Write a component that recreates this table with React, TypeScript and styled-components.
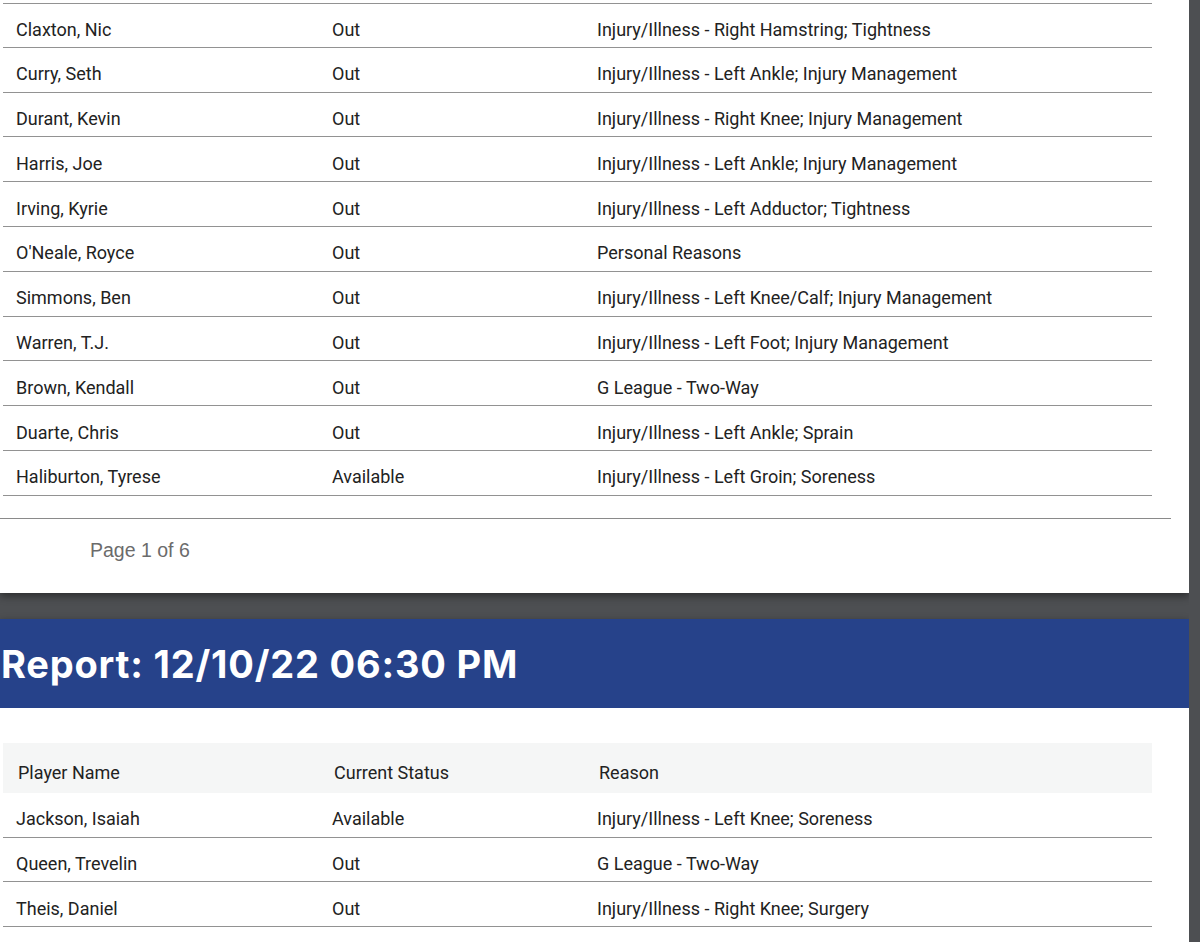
import React from 'react'
import styled, { createGlobalStyle } from 'styled-components'

type Row = {
  name: string
  status: string
  reason: string
}

const firstPage: Row[] = [
  { name: 'Claxton, Nic', status: 'Out', reason: 'Injury/Illness - Right Hamstring; Tightness' },
  { name: 'Curry, Seth', status: 'Out', reason: 'Injury/Illness - Left Ankle; Injury Management' },
  { name: 'Durant, Kevin', status: 'Out', reason: 'Injury/Illness - Right Knee; Injury Management' },
  { name: 'Harris, Joe', status: 'Out', reason: 'Injury/Illness - Left Ankle; Injury Management' },
  { name: 'Irving, Kyrie', status: 'Out', reason: 'Injury/Illness - Left Adductor; Tightness' },
  { name: "O'Neale, Royce", status: 'Out', reason: 'Personal Reasons' },
  { name: 'Simmons, Ben', status: 'Out', reason: 'Injury/Illness - Left Knee/Calf; Injury Management' },
  { name: 'Warren, T.J.', status: 'Out', reason: 'Injury/Illness - Left Foot; Injury Management' },
  { name: 'Brown, Kendall', status: 'Out', reason: 'G League - Two-Way' },
  { name: 'Duarte, Chris', status: 'Out', reason: 'Injury/Illness - Left Ankle; Sprain' },
  { name: 'Haliburton, Tyrese', status: 'Available', reason: 'Injury/Illness - Left Groin; Soreness' },
]

const secondPage: Row[] = [
  { name: 'Jackson, Isaiah', status: 'Available', reason: 'Injury/Illness - Left Knee; Soreness' },
  { name: 'Queen, Trevelin', status: 'Out', reason: 'G League - Two-Way' },
  { name: 'Theis, Daniel', status: 'Out', reason: 'Injury/Illness - Right Knee; Surgery' },
]

const GlobalStyle = createGlobalStyle`
  html, body {
    margin: 0;
    padding: 0;
    height: 100%;
    overflow: hidden;
    background: #4d4f52;
  }
`

const App: React.FC = () => {
  return (
    <Viewer>
      <GlobalStyle />
      <Page>
        <Table topRule>
          {firstPage.map(r => (
            <TableRow key={r.name}>
              <Cell>{r.name}</Cell>
              <Cell>{r.status}</Cell>
              <Cell>{r.reason}</Cell>
            </TableRow>
          ))}
        </Table>
        <Footer>
          <PageNumber>Page 1 of 6</PageNumber>
        </Footer>
      </Page>

      <Page>
        <ReportBanner>
          <ReportTitle>Report: 12/10/22 06:30 PM</ReportTitle>
        </ReportBanner>
        <Table>
          <HeaderRow>
            <HeaderCell>Player Name</HeaderCell>
            <HeaderCell>Current Status</HeaderCell>
            <HeaderCell>Reason</HeaderCell>
          </HeaderRow>
          {secondPage.map(r => (
            <TableRow key={r.name}>
              <Cell>{r.name}</Cell>
              <Cell>{r.status}</Cell>
              <Cell>{r.reason}</Cell>
            </TableRow>
          ))}
        </Table>
      </Page>
    </Viewer>
  )
}

const Viewer = styled.div`
  display: flex;
  flex-direction: column;
  gap: 26px;
  width: 1189px;
  height: 942px;
  overflow: hidden;
`

const Page = styled.section`
  display: flex;
  flex-direction: column;
  flex-shrink: 0;
  background: #ffffff;
  box-shadow: 0 3px 8px rgba(0, 0, 0, 0.45);
  &:last-child {
    flex: 1;
  }
`

const Table = styled.div<{ topRule?: boolean }>`
  margin: 0 37px 0 3px;
  padding-top: ${p => (p.topRule ? '3px' : '35px')};
  & > :first-child {
    border-top: ${p => (p.topRule ? '1px solid #929292' : 'none')};
  }
`

const TableRow = styled.div`
  display: grid;
  grid-template-columns: 316px 265px 1fr;
  align-items: center;
  height: 44.8px;
  box-sizing: border-box;
  border-bottom: 1px solid #929292;
  padding-top: 8px;
`

const HeaderRow = styled(TableRow)`
  height: 50px;
  padding-top: 9px;
  border-bottom: none;
  background: #f5f6f6;
`

const Cell = styled.div`
  padding-left: 13px;
  font-family: Roboto, 'Liberation Sans', sans-serif;
  font-size: 18px;
  color: #222222;
  white-space: nowrap;
`

const HeaderCell = styled(Cell)`
  padding-left: 15px;
`

const Footer = styled.div`
  margin-top: 22px;
  margin-right: 18px;
  height: 75px;
  border-top: 1px solid #8a8a8a;
  display: flex;
  align-items: flex-start;
  padding-top: 20px;
  box-sizing: border-box;
`

const PageNumber = styled.span`
  padding-left: 90px;
  font-family: 'Liberation Sans', Arial, sans-serif;
  font-size: 19.5px;
  color: #6b6b6b;
`

const ReportBanner = styled.div`
  height: 89px;
  background: #26428a;
  display: flex;
  align-items: center;
`

const ReportTitle = styled.h1`
  margin: 0;
  padding: 2px 0 0 1px;
  font-family: Inter, 'Open Sans', sans-serif;
  font-weight: 700;
  font-size: 38px;
  letter-spacing: 0.8px;
  color: #ffffff;
`

export default App
